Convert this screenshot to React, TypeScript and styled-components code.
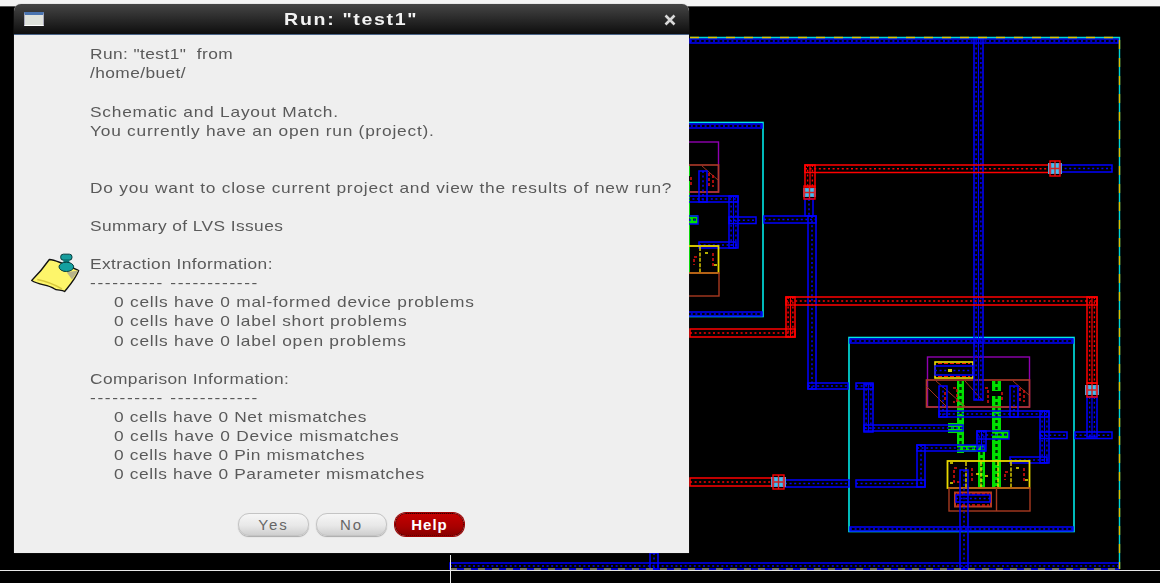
import React from "react";
import styled, { createGlobalStyle } from "styled-components";

const Global = createGlobalStyle`
  html, body { margin: 0; padding: 0; background: #000; }
  #root { width: 1160px; height: 583px; overflow: hidden; }
`;

const Screen = styled.div`
  position: relative;
  width: 1160px;
  height: 583px;
  background: #000;
  overflow: hidden;
  display: flex;
  flex-direction: column;
`;

const TopStrip = styled.div`
  height: 6px;
  flex: none;
  background: #f4f4f4;
  border-bottom: 1px solid #555;
`;

const Canvas = styled.svg`
  position: absolute;
  left: 0;
  top: 0;
  display: block;
`;

const Dialog = styled.section`
  position: absolute;
  left: 14px;
  top: 4px;
  width: 675px;
  height: 549px;
  display: flex;
  flex-direction: column;
  background: #efefef;
  border-radius: 7px 7px 0 0;
  box-shadow: 0 0 1px #777;
  font-family: "Liberation Sans", Arial, sans-serif;
`;

const TitleBar = styled.header`
  height: 30px;
  flex: none;
  display: flex;
  align-items: center;
  padding: 0 12px 0 10px;
  border-radius: 7px 7px 0 0;
  background: linear-gradient(#454545, #2c2c2c 45%, #0e0e0e);
  border-bottom: 1px solid #4a6488;
`;

const WinIcon = styled.span`
  width: 20px;
  height: 14px;
  flex: none;
  box-sizing: border-box;
  background: #dfe2dc;
  border-top: 3px solid #4a74b0;
  border-left: 1px solid #aab;
  border-right: 1px solid #aab;
  border-bottom: 1px solid #fff;
`;

const Title = styled.h1`
  flex: 1;
  margin: 0;
  text-align: center;
  color: #f2f2f2;
  font-size: 17px;
  font-weight: 700;
  letter-spacing: 1.45px;
  line-height: 32px;
  height: 30px;
  padding-right: 4px;
  transform: scaleX(1.15);
  filter: blur(0.25px);
`;

const CloseBox = styled.span`
  width: 14px;
  height: 14px;
  margin-top: 2px;
  flex: none;
  display: flex;
`;

const Body = styled.div`
  flex: 1;
  display: flex;
  flex-direction: column;
  padding: 9.4px 0 0;
`;

const Message = styled.div`
  display: flex;
`;

const IconColumn = styled.div`
  width: 76px;
  flex: none;
  padding: 208px 0 0 16px;
  box-sizing: border-box;
`;

const TextColumn = styled.div`
  flex: 1;
  color: #5a5a5a;
  font-size: 15px;
  letter-spacing: 0.66px;
  transform: scaleX(1.155);
  transform-origin: left center;
  filter: blur(0.3px);
`;

const spacing = { body: 0.66, rule: 1.4, head: 0.36, mid: 0.54 };

const Line = styled.div<{ $indent?: boolean; $kind?: keyof typeof spacing }>`
  height: 19.09px;
  line-height: 19.09px;
  white-space: pre;
  padding-left: ${(p) => (p.$indent ? 20.8 : 0)}px;
  letter-spacing: ${(p) => spacing[p.$kind ?? "body"]}px;
`;

const Buttons = styled.div`
  display: flex;
  gap: 7px;
  margin: 29.4px 0 0 224px;
`;

const Btn = styled.button<{ $primary?: boolean }>`
  width: ${(p) => (p.$primary ? 69 : 71)}px;
  height: 23px;
  padding: 0;
  margin-left: ${(p) => (p.$primary ? 1 : 0)}px;
  border-radius: 11px;
  font-family: inherit;
  font-size: 15px;
  letter-spacing: ${(p) => (p.$primary ? 1 : 2)}px;
  font-weight: ${(p) => (p.$primary ? 700 : 400)};
  color: ${(p) => (p.$primary ? "#fff" : "#666")};
  border: 1px ${(p) => (p.$primary ? "dotted #300" : "solid #c4c4c4")};
  background: ${(p) =>
    p.$primary
      ? "linear-gradient(#c40000, #a80000 60%, #8a0000)"
      : "linear-gradient(#f6f6f6, #e8e8e8 55%, #cfcfcf)"};
  box-shadow: ${(p) => (p.$primary ? "0 0 0 1px #a00000" : "0 1px 1px #aaa")};
`;

type R = [number, number, number, number];

function Wire({ r, c = "#0000ff" }: { r: R; c?: string }) {
  const [x, y, w, h] = r;
  const horiz = w >= h;
  const cx = x + w / 2;
  const cy = y + h / 2;
  const wide = w > 8.5;
  return (
    <g>
      <rect x={x} y={y} width={w} height={h} fill="none" stroke={c} strokeWidth={1.5} />
      {horiz ? (
        <line x1={x} y1={cy} x2={x + w} y2={cy} stroke={c} strokeWidth={1.5} strokeDasharray="2 2.6" />
      ) : (
        <>
          <line
            x1={cx}
            y1={y}
            x2={cx}
            y2={y + h}
            stroke={c}
            strokeWidth={wide ? 1.2 : 1.5}
            strokeDasharray={wide ? undefined : "2 2.6"}
          />
          {wide && (
            <>
              <line x1={cx + 2.4} y1={y} x2={cx + 2.4} y2={y + h} stroke={c} strokeWidth={1.4} strokeDasharray="2 2.8" />
              <line x1={cx - 2.4} y1={y} x2={cx - 2.4} y2={y + h} stroke={c} strokeWidth={1.4} strokeDasharray="2 2.8" />
            </>
          )}
        </>
      )}
    </g>
  );
}

function GreenWire({ r }: { r: R }) {
  const [x, y, w, h] = r;
  const horiz = w >= h;
  return (
    <g>
      <rect x={x} y={y} width={w} height={h} fill="#00e000" />
      {horiz ? (
        <line x1={x} y1={y + h / 2} x2={x + w} y2={y + h / 2} stroke="#002800" strokeWidth={2} strokeDasharray="3 3" />
      ) : (
        <line x1={x + w / 2} y1={y} x2={x + w / 2} y2={y + h} stroke="#002800" strokeWidth={2.4} strokeDasharray="3 3" />
      )}
    </g>
  );
}

function Via({ x, y, w, h, gx }: { x: number; y: number; w: number; h: number; gx: number }) {
  return (
    <g>
      <rect x={x - gx} y={y + 2} width={w + gx * 2} height={h - 4} fill="#5a9cd0" />
      <rect x={x + 2} y={y + 3} width={w - 4} height={h - 6} fill="#3fc0f0" />
      <path d={`M${x + 1} ${y + h / 2}H${x + w - 1}M${x + w / 2} ${y}V${y + h}`} stroke="#d02020" strokeWidth={1.4} />
      <rect x={x} y={y} width={w} height={h} fill="none" stroke="#ff0000" strokeWidth={1.4} />
    </g>
  );
}

/* One standard cell; coordinates are those of the lower right instance. */
const cellGreen: R[] = [
  [957, 381, 7, 72], [957, 445, 28, 7], [978, 452, 7, 36], [992, 381, 9, 10], [992, 396, 9, 92],
  [948, 423, 16, 10], [992, 430, 17, 9],
];
const cellBlue: R[] = [
  [939, 386, 8, 31], [1010, 386, 8, 31], [939, 411, 110, 6], [1040, 411, 9, 52], [1010, 457, 37, 6],
  [977, 431, 9, 20], [977, 431, 32, 8], [917, 445, 68, 6], [917, 445, 8, 42], [856, 480, 69, 7],
  [864, 384, 9, 48], [864, 425, 99, 6], [856, 383, 17, 6], [1040, 432, 27, 6.5],
];

function Cell({ dx, dy }: { dx: number; dy: number }) {
  return (
    <g transform={`translate(${dx} ${dy})`}>
      <rect x={849} y={337.5} width={225} height={194} fill="none" stroke="#00e8e8" strokeWidth={1.6} />
      <Wire r={[850, 339, 223, 4]} />
      <Wire r={[850, 527, 223, 4]} />
      <rect x={927.5} y={357} width={102} height={50} fill="none" stroke="#9000b0" strokeWidth={1.4} />
      {cellGreen.map((r, i) => (
        <GreenWire key={i} r={r} />
      ))}
      <rect x={926.5} y={380} width={103} height={27} fill="none" stroke="#b03a2a" strokeWidth={1.6} />
      <path d="M936 381l30 26M965 381l18 20M1013 381l16 14M926 386l20 20" stroke="#a03020" strokeWidth={1} fill="none" />
      <path d="M945 392v10M953 388h4v14h-4M985 388h3v16M1002 392v8M1020 388v14M1024 390v12" stroke="#e01010" strokeWidth={1.5} strokeDasharray="3 2" fill="none" />
      {cellBlue.map((r, i) => (
        <Wire key={i} r={r} />
      ))}
      <rect x={935} y={362} width={38} height={16} fill="none" stroke="#f0e000" strokeWidth={1.6} />
      <path d="M938 363.5h32M938 376.5h32" stroke="#ff2000" strokeWidth={1.2} strokeDasharray="4 2" />
      <Wire r={[935, 366, 38, 9]} />
      <rect x={948} y={369} width={4} height={3} fill="#d8d000" />
      <rect x={947.5} y={461} width={82} height={27} fill="none" stroke="#e8d800" strokeWidth={1.8} />
      <path d="M966 462v26M981 462v26M998 462v26M1011 462v26" stroke="#e8d800" strokeWidth={1.4} strokeDasharray="4 1.4" />
      <path d="M957 468h-3v14h6M972 468v14M1008 472h-3v8M1024 468v14" stroke="#e01010" strokeWidth={1.5} strokeDasharray="3 2" fill="none" />
      <path d="M950 463h3M950 483h3M976 474h3M985 476h3M1016 468h3M1025 480h3" stroke="#f0e800" strokeWidth={1.5} />
      <rect x={949} y={488} width={81} height={23} fill="none" stroke="#a83a20" strokeWidth={1.4} />
      <path d="M996.5 488v23" stroke="#a83a20" strokeWidth={1.4} />
      <rect x={955} y={492.5} width={36} height={14} fill="none" stroke="#b83a20" strokeWidth={2} />
      <path d="M957 494h32M957 505h32" stroke="#e01010" strokeWidth={1.5} strokeDasharray="3 2" />
      <Wire r={[956, 495, 34, 7]} />
    </g>
  );
}

const blueRoutes: R[] = [
  [974, 38, 9, 362], [808, 216, 8, 173], [805, 199, 8, 17], [764, 216, 52, 7],
  [808, 383, 40, 6], [785, 480, 64, 7], [1087, 397, 10, 40],
  [1075, 432, 37, 6.5], [1060, 165, 52, 7], [960, 470, 8, 99], [690, 39, 428, 4], [450, 563, 669, 6],
  [650, 553, 8, 16],
];

const redRoutes: R[] = [
  [805, 165, 249, 7.5], [805, 165, 10, 22], [786, 297, 311, 8], [786, 297, 9, 40], [690, 329, 105, 8],
  [1087, 297, 10, 86], [690, 478, 84, 8],
];

function Layout() {
  return (
    <Canvas width={1160} height={583} viewBox="0 0 1160 583">
      <Cell dx={-311} dy={-215} />
      <Cell dx={0} dy={0} />
      {blueRoutes.map((r, i) => (
        <Wire key={i} r={r} />
      ))}
      {redRoutes.map((r, i) => (
        <Wire key={i} r={r} c="#ff0000" />
      ))}
      <Via x={804} y={186} w={11} h={13} gx={1} />
      <Via x={1050} y={161} w={10} h={15} gx={2} />
      <Via x={1087} y={383} w={10} h={14} gx={2} />
      <Via x={773} y={475} w={11} h={14} gx={2} />
      <path d="M690 37.5H1119.5V569" fill="none" stroke="#00d8d8" strokeWidth={1.4} />
      <path d="M690 37.5H1119.5V569" fill="none" stroke="#e0c000" strokeWidth={1.4} strokeDasharray="9 9" />
      <path d="M450 569H1119" stroke="#e0e000" strokeWidth={1} strokeDasharray="7 7" />
      <path d="M0 570.5H1160M450.5 555V583" stroke="#e8e8e8" strokeWidth={1} />
    </Canvas>
  );
}

function NoteIcon() {
  return (
    <svg width="50" height="42" viewBox="30 40 150 125">
      <path
        d="M35 125 C52 108 72 85 88 62 C112 64 148 82 176 95 C168 118 150 138 134 158 C124 150 112 158 100 148 C82 138 55 138 35 125Z"
        fill="#fdf56a"
        stroke="#111"
        strokeWidth={4}
        strokeLinejoin="round"
      />
      <path d="M140 100 L175 95 L156 122 Z" fill="#b8b48a" />
      <path d="M52 122 C72 126 98 134 126 150" fill="none" stroke="#d8c83c" strokeWidth={4} />
      <path d="M132 98 L138 72" stroke="#0a5a5a" strokeWidth={5} />
      <rect x="122" y="46" width="34" height="18" rx="8" fill="#169c9c" stroke="#063c3c" strokeWidth={3} />
      <rect x="130" y="62" width="18" height="12" fill="#0c7c7c" />
      <ellipse cx="139" cy="84" rx="22" ry="14" fill="#14a0a0" stroke="#063c3c" strokeWidth={3} />
    </svg>
  );
}

const lines: { t: string; i?: boolean; k?: keyof typeof spacing }[] = [
  { t: 'Run: "test1"  from', k: "head" },
  { t: "/home/buet/", k: "head" },
  { t: "" },
  { t: "Schematic and Layout Match." },
  { t: "You currently have an open run (project)." },
  { t: "" },
  { t: "" },
  { t: "Do you want to close current project and view the results of new run?" },
  { t: "" },
  { t: "Summary of LVS Issues", k: "head" },
  { t: "" },
  { t: "Extraction Information:", k: "head" },
  { t: "---------- ------------", k: "rule" },
  { t: "0 cells have 0 mal-formed device problems", i: true },
  { t: "0 cells have 0 label short problems", i: true },
  { t: "0 cells have 0 label open problems", i: true },
  { t: "" },
  { t: "Comparison Information:", k: "head" },
  { t: "---------- ------------", k: "rule" },
  { t: "0 cells have 0 Net mismatches", i: true, k: "mid" },
  { t: "0 cells have 0 Device mismatches", i: true },
  { t: "0 cells have 0 Pin mismatches", i: true, k: "mid" },
  { t: "0 cells have 0 Parameter mismatches", i: true, k: "mid" },
];

export default function App() {
  return (
    <Screen>
      <Global />
      <TopStrip />
      <Layout />
      <Dialog>
        <TitleBar>
          <WinIcon />
          <Title>Run: "test1"</Title>
          <CloseBox>
            <svg width="14" height="14" viewBox="0 0 14 14">
              <path d="M2.5 2.5L11.5 11.5M11.5 2.5L2.5 11.5" stroke="#d8d8d8" strokeWidth={2.6} />
            </svg>
          </CloseBox>
        </TitleBar>
        <Body>
          <Message>
            <IconColumn>
              <NoteIcon />
            </IconColumn>
            <TextColumn>
              {lines.map((l, i) => (
                <Line key={i} $indent={l.i} $kind={l.k}>
                  {l.t}
                </Line>
              ))}
            </TextColumn>
          </Message>
          <Buttons>
            <Btn>Yes</Btn>
            <Btn>No</Btn>
            <Btn $primary>Help</Btn>
          </Buttons>
        </Body>
      </Dialog>
    </Screen>
  );
}
